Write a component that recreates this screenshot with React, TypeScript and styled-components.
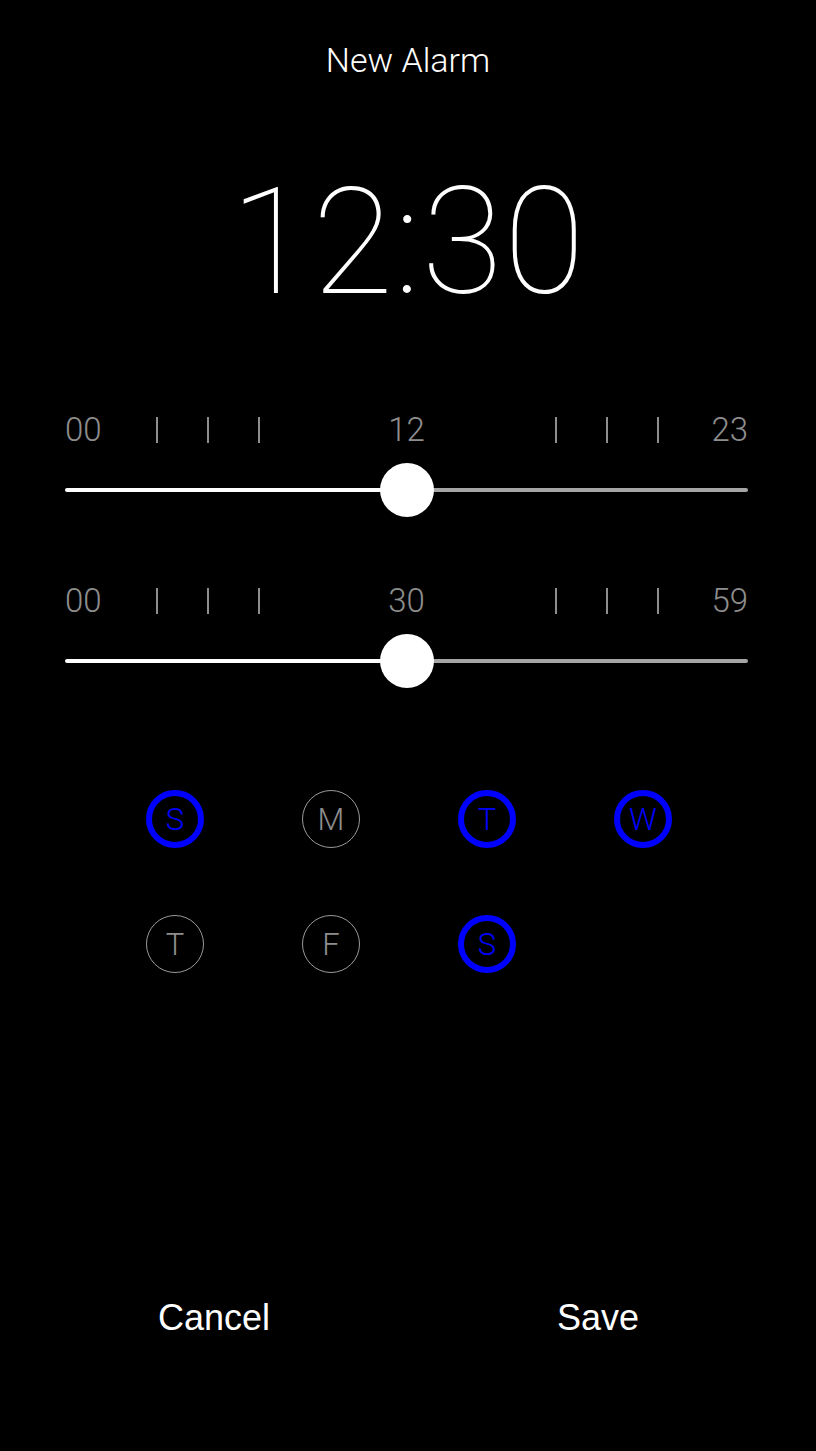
import React from "react";
import styled, { createGlobalStyle } from "styled-components";

const GlobalStyle = createGlobalStyle`
  html, body {
    margin: 0;
    padding: 0;
    background: #000;
  }
  body {
    font-family: "Roboto", "Liberation Sans", sans-serif;
  }
`;

const Screen = styled.div`
  min-height: 1451px;
  width: 816px;
  background: #000;
  display: flex;
  flex-direction: column;
  align-items: center;
  box-sizing: border-box;
  padding-top: 40px;
  padding-bottom: 113px;
`;

const Title = styled.div`
  font-family: "Roboto", sans-serif;
  font-weight: 300;
  font-size: 34px;
  line-height: 40px;
  color: #fff;
  height: 40px;
`;

const Clock = styled.div`
  margin-top: 89px;
  font-family: "Roboto", sans-serif;
  font-weight: 100;
  font-size: 148px;
  line-height: 148px;
  height: 148px;
  color: #fff;
  letter-spacing: 1px;
`;

const SliderBlock = styled.div<{ $top: number }>`
  margin-top: ${(p) => p.$top}px;
  width: 683px;
  margin-left: -3px;
  display: flex;
  flex-direction: column;
  gap: 13px;
`;

const LabelRow = styled.div`
  display: grid;
  grid-template-columns: auto 1fr auto 1fr auto;
  align-items: center;
  height: 40px;
  font-family: "Roboto", sans-serif;
  font-weight: 300;
  font-size: 33px;
  line-height: 40px;
  color: #8e8e8e;
`;

const Ticks = styled.div<{ $side: "left" | "right" }>`
  display: flex;
  gap: 49px;
  justify-content: ${(p) => (p.$side === "left" ? "flex-start" : "flex-end")};
  padding-left: ${(p) => (p.$side === "left" ? "54px" : "0")};
  padding-right: ${(p) => (p.$side === "right" ? "52px" : "0")};
`;

const Tick = styled.span`
  width: 2px;
  height: 26px;
  background: #8e8e8e;
`;

const Track = styled.div`
  position: relative;
  height: 54px;
  display: flex;
  align-items: center;
`;

const TrackLine = styled.div<{ $active: boolean }>`
  height: 4px;
  flex: 1;
  background: ${(p) => (p.$active ? "#fff" : "#a5a5a5")};
  border-radius: 2px;
`;

const Thumb = styled.div`
  width: 54px;
  height: 54px;
  border-radius: 50%;
  background: #fff;
  margin: 0 -2px;
  position: relative;
  z-index: 1;
  flex: none;
`;

const Days = styled.div`
  margin-top: 102px;
  display: grid;
  grid-template-columns: repeat(4, 156px);
  row-gap: 67px;
  justify-items: center;
  margin-left: 2px;
`;

const Day = styled.div<{ $on: boolean }>`
  width: 58px;
  height: 58px;
  box-sizing: border-box;
  border-radius: 50%;
  border: ${(p) => (p.$on ? "6px solid #0000ff" : "1px solid #9a9a9a")};
  color: ${(p) => (p.$on ? "#0000ff" : "#8e8e8e")};
  display: flex;
  align-items: center;
  justify-content: center;
  font-family: "Roboto", sans-serif;
  font-weight: 300;
  font-size: 31px;
  line-height: 1;
`;

const Actions = styled.div`
  margin-top: auto;
  display: grid;
  grid-template-columns: repeat(2, 384px);
  justify-items: center;
  margin-left: -4px;
`;

const ActionButton = styled.button`
  background: none;
  border: none;
  padding: 0;
  color: #fff;
  font-family: "Liberation Sans", Arial, sans-serif;
  font-size: 36px;
  line-height: 40px;
  cursor: pointer;
`;

type SliderProps = { min: string; mid: string; max: string; top: number };

function Slider({ min, mid, max, top }: SliderProps) {
  return (
    <SliderBlock $top={top}>
      <LabelRow>
        <span>{min}</span>
        <Ticks $side="left">
          <Tick />
          <Tick />
          <Tick />
        </Ticks>
        <span>{mid}</span>
        <Ticks $side="right">
          <Tick />
          <Tick />
          <Tick />
        </Ticks>
        <span>{max}</span>
      </LabelRow>
      <Track>
        <TrackLine $active />
        <Thumb />
        <TrackLine $active={false} />
      </Track>
    </SliderBlock>
  );
}

const days: { l: string; on: boolean }[] = [
  { l: "S", on: true },
  { l: "M", on: false },
  { l: "T", on: true },
  { l: "W", on: true },
  { l: "T", on: false },
  { l: "F", on: false },
  { l: "S", on: true },
];

export default function App() {
  return (
    <>
      <GlobalStyle />
      <Screen>
        <Title>New Alarm</Title>
        <Clock>12:30</Clock>
        <Slider min="00" mid="12" max="23" top={93} />
        <Slider min="00" mid="30" max="59" top={64} />
        <Days>
          {days.map((d, i) => (
            <Day key={i} $on={d.on}>
              {d.l}
            </Day>
          ))}
        </Days>
        <Actions>
          <ActionButton>Cancel</ActionButton>
          <ActionButton>Save</ActionButton>
        </Actions>
      </Screen>
    </>
  );
}
